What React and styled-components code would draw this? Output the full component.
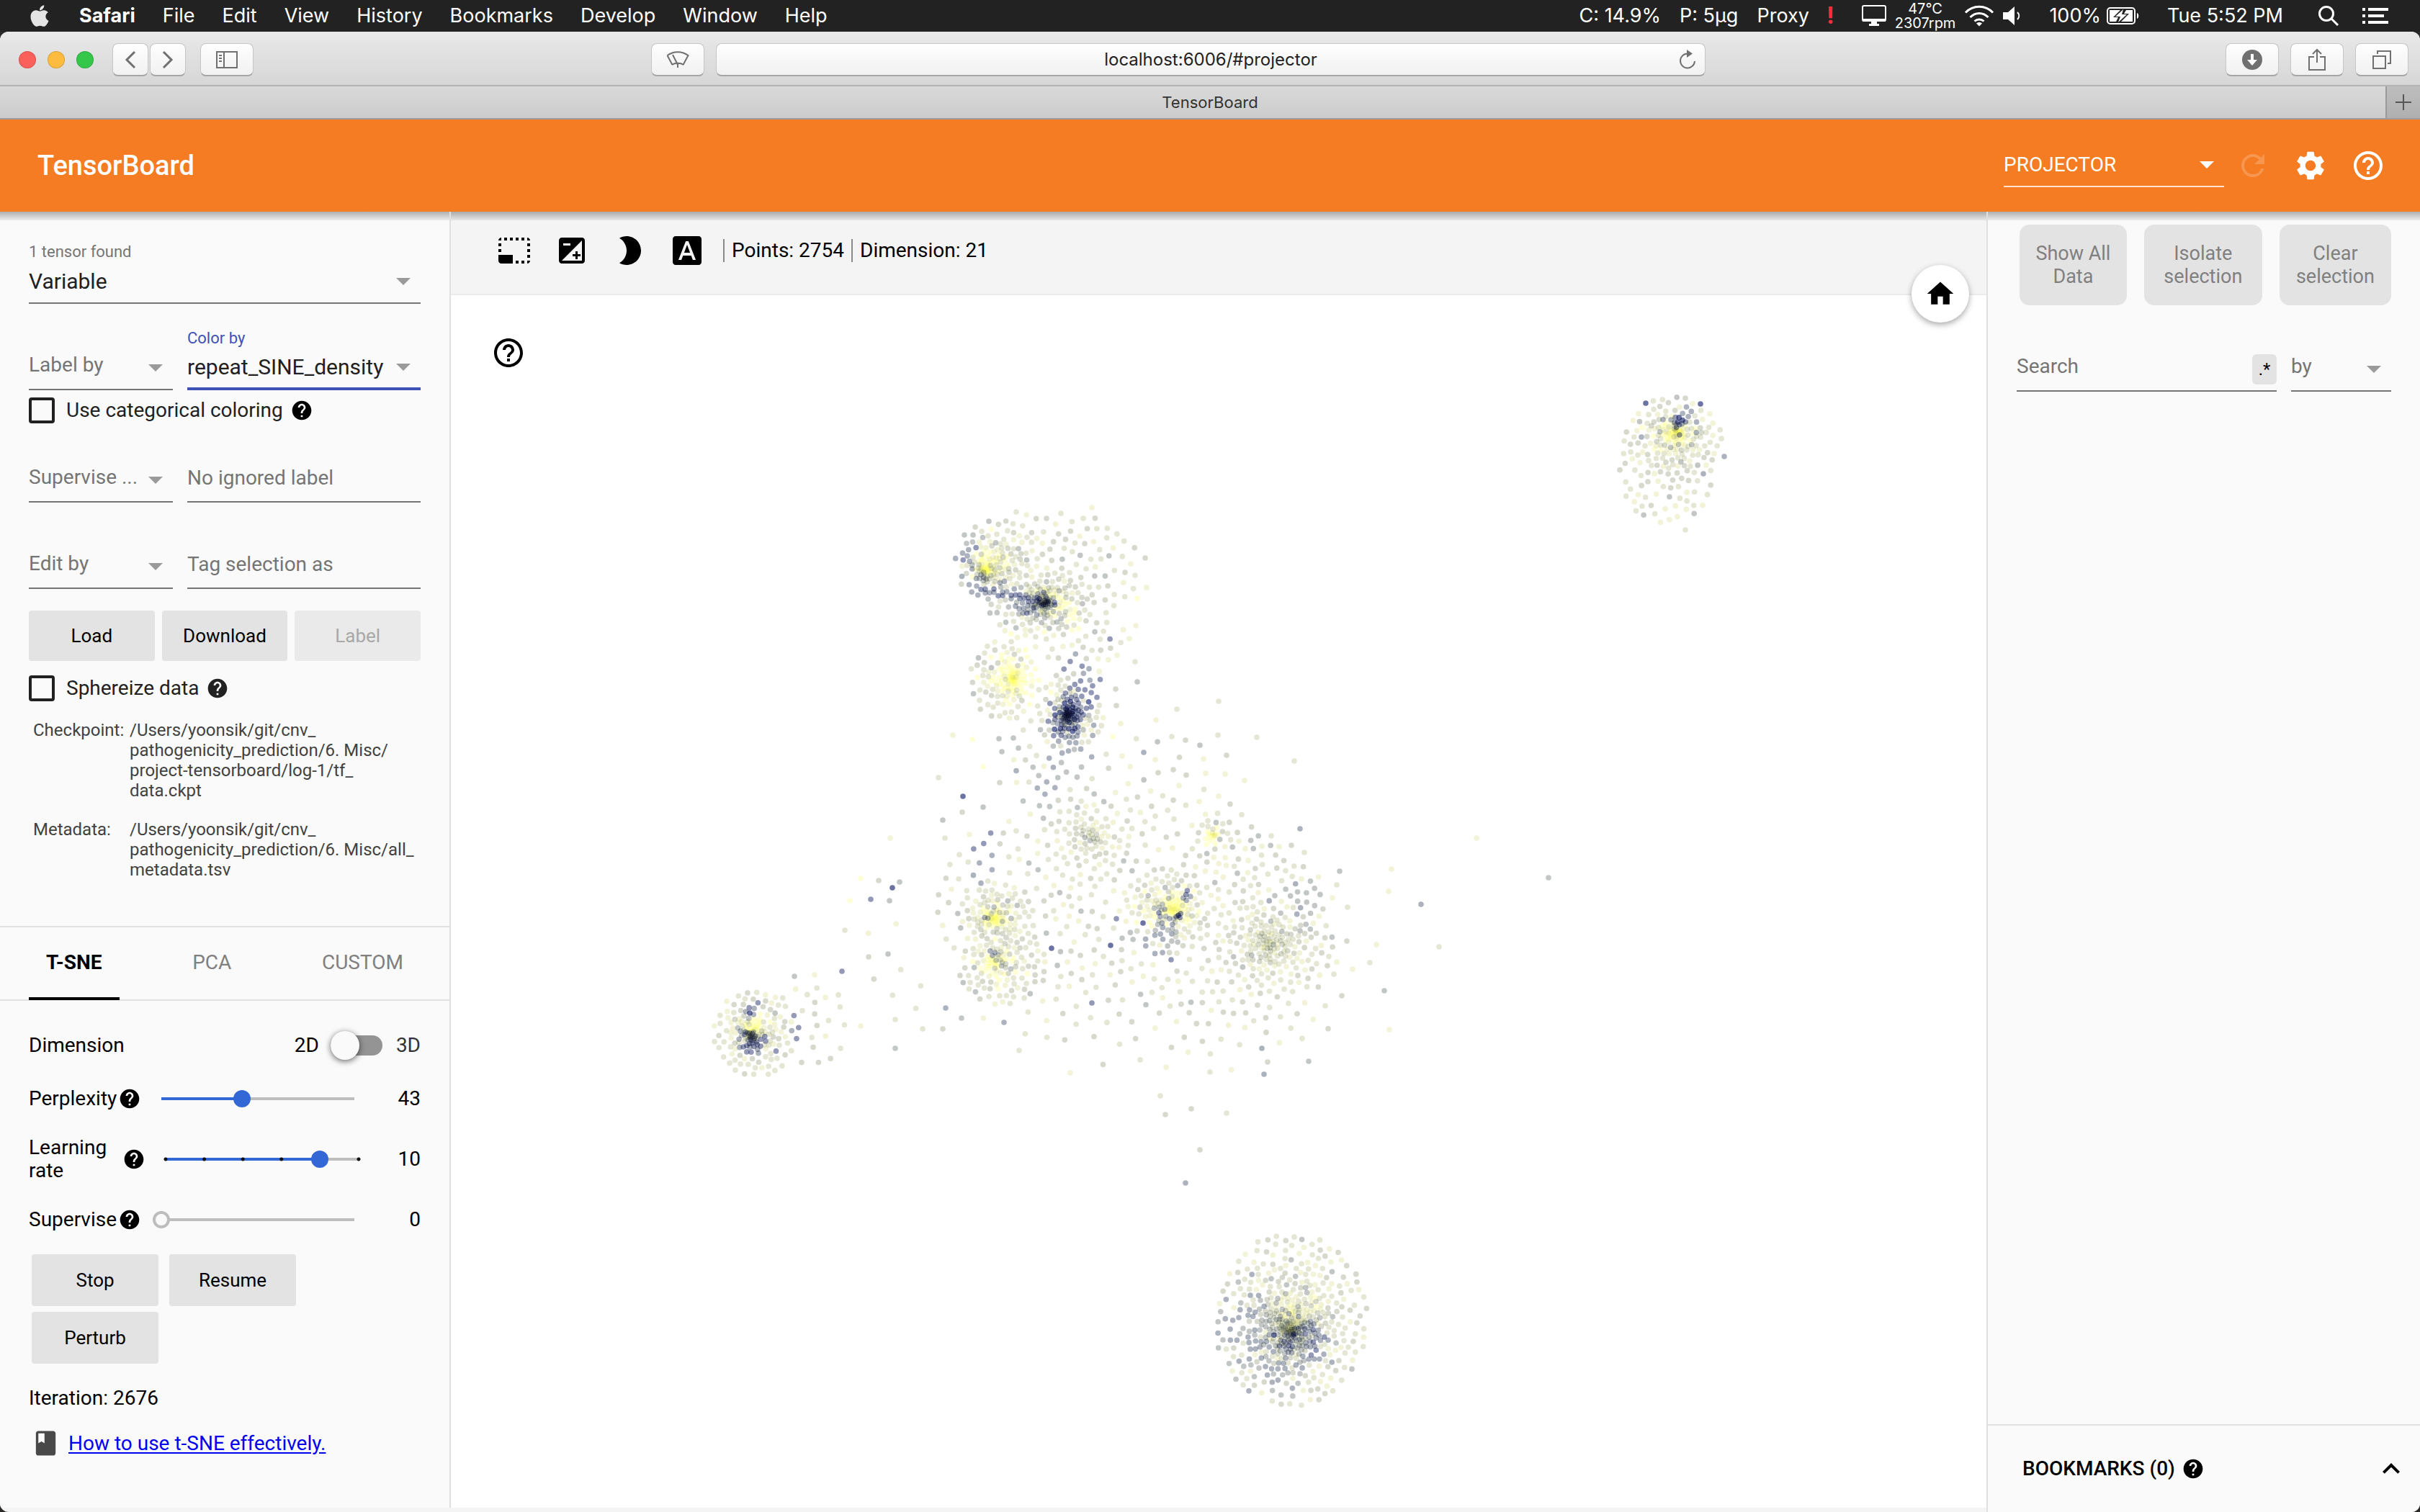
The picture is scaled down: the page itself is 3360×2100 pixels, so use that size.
import React, { useEffect, useRef } from "react";
import styled, { createGlobalStyle, css } from "styled-components";
import {
  MdHelp,
  MdHelpOutline,
  MdSettings,
  MdRefresh,
  MdHome,
  MdClass,
  MdExpandLess,
  MdPhotoSizeSelectSmall,
  MdExposure,
  MdBrightness2,
  MdFontDownload,
} from "react-icons/md";
import { FaApple } from "react-icons/fa";

const GlobalStyle = createGlobalStyle`
  *, *::before, *::after { box-sizing: border-box; }
  body {
    margin: 0;
    background: #2b2a28;
    color: #000;
    font-family: Roboto, "Noto Sans", sans-serif;
    font-size: 28px;
    line-height: 32px;
  }
  button, input, select { font: inherit; color: inherit; margin: 0; }
  svg { display: block; flex: none; }
`;

/* ---------- system menu bar ---------- */

const Screen = styled.div`
  min-height: 100vh;
  display: flex;
  flex-direction: column;
`;

const MenuBar = styled.header`
  height: 44px;
  display: flex;
  align-items: center;
  justify-content: space-between;
  padding: 0 44px 0 38px;
  background: #222;
  color: #fff;
  font-family: Inter, "Noto Sans", sans-serif;
  font-size: 27px;
  white-space: nowrap;
`;

const Menus = styled.nav`
  display: flex;
  align-items: center;
  gap: 38px;
`;

const AppName = styled.strong`
  font-weight: 700;
`;

const Status = styled.div`
  display: flex;
  align-items: center;
  gap: ${(p) => p.$gap}px;
`;

const Sensor = styled.div`
  font-size: 20px;
  line-height: 20px;
  text-align: center;
`;

const Alert = styled.span`
  color: #ff2d3c;
  font-weight: 700;
  font-size: 32px;
`;

/* ---------- browser chrome ---------- */

const BrowserWindow = styled.div`
  flex: 1;
  display: flex;
  flex-direction: column;
  border-radius: 12px;
  overflow: hidden;
  background: #f4f4f4;
`;

const Toolbar = styled.div`
  height: 76px;
  display: grid;
  grid-template-columns: 878px minmax(0, 1fr) 976px;
  align-items: center;
  padding: 4px 16px 0 26px;
  background: linear-gradient(#e9e9e9, #d6d6d6);
  border-bottom: 2px solid #b3b3b3;
`;

const ToolGroup = styled.div`
  display: flex;
  align-items: center;
  justify-content: ${(p) => (p.$end ? "flex-end" : "flex-start")};
  gap: ${(p) => p.$gap || 16}px;
`;

const Lights = styled.div`
  display: flex;
  gap: 16px;
  margin-right: 6px;
`;

const Light = styled.button`
  width: 24px;
  height: 24px;
  padding: 0;
  border-radius: 50%;
  border: 1px solid rgba(0, 0, 0, 0.15);
  background: ${(p) => p.$color};
`;

const raised = css`
  height: 46px;
  border: 1px solid #c6c6c6;
  border-bottom: 2px solid #a6a6a6;
  border-radius: 8px;
  background: linear-gradient(#fefefe, #f1f1f1);
`;

const ChromeButton = styled.button`
  ${raised}
  width: ${(p) => p.$w || 74}px;
  padding: 0;
  display: flex;
  align-items: center;
  justify-content: center;
  color: #707070;
`;

const AddressBar = styled.div`
  ${raised}
  flex: 1;
  display: flex;
  align-items: center;
  padding: 0 12px 0 36px;
  color: #707070;
`;

const Address = styled.input`
  flex: 1;
  min-width: 0;
  border: 0;
  outline: 0;
  background: none;
  text-align: center;
  color: #222;
  font-family: Inter, "Noto Sans", sans-serif;
  font-size: 24px;
`;

const PlainButton = styled.button`
  display: flex;
  align-items: center;
  justify-content: center;
  padding: 0;
  border: 0;
  background: none;
  opacity: ${(p) => (p.disabled ? 0.2 : 1)};
`;

const TabStrip = styled.div`
  height: 46px;
  display: flex;
  background: linear-gradient(#d9d9d9, #cccccc);
  border-bottom: 2px solid #9d9d9d;
`;

const TabTitle = styled.div`
  flex: 1;
  padding-left: 48px;
  text-align: center;
  line-height: 44px;
  font-family: Inter, "Noto Sans", sans-serif;
  font-size: 22px;
  color: #333;
`;

const NewTab = styled.button`
  width: 48px;
  display: flex;
  align-items: center;
  justify-content: center;
  padding: 0;
  border: 0;
  border-left: 2px solid #9a9a9a;
  background: linear-gradient(#bdbdbd, #b0b0b0);
  color: #555;
`;

/* ---------- application header ---------- */

const AppBar = styled.header`
  height: 128px;
  display: flex;
  align-items: center;
  justify-content: space-between;
  padding: 0 48px 0 52px;
  background: #f57c22;
  color: #fff;
`;

const Brand = styled.h1`
  margin: 0;
  font-size: 38px;
  font-weight: 500;
`;

const BarActions = styled.div`
  display: flex;
  align-items: center;
  gap: ${(p) => p.$gap}px;
`;

/* ---------- form parts ---------- */

const SelectBox = styled.div`
  display: grid;
  align-items: center;
  height: 60px;
  border-bottom: ${(p) => (p.$focus ? "4px solid #3f51b5" : p.$light ? "2px solid #fde2cf" : "2px solid #757575")};
  width: ${(p) => (p.$w ? p.$w + "px" : "auto")};
  > * { grid-area: 1 / 1; }
`;

const Caret = styled.span`
  justify-self: end;
  margin-right: 14px;
  border: 10px solid transparent;
  border-top-color: ${(p) => (p.$light ? "#fff" : "#9a9a9a")};
  border-bottom: 0;
  pointer-events: none;
`;

const Select = styled.select`
  width: 100%;
  height: 100%;
  appearance: none;
  border: 0;
  outline: 0;
  background: none;
  padding: 0 36px ${(p) => (p.$hint ? 8 : 0)}px 0;
  font-size: ${(p) => (p.$hint || p.$light ? 28 : 30)}px;
  color: ${(p) => (p.$light ? "#fff" : p.$hint ? "#757575" : "#212121")};
`;

const FieldRow = styled.div`
  display: grid;
  grid-template-columns: ${(p) => p.$cols || "1fr"};
  column-gap: 20px;
  margin-bottom: ${(p) => p.$after || 0}px;
`;

const Field = styled.div`
  display: flex;
  flex-direction: column;
  justify-content: flex-end;
  height: 84px;
`;

const FloatLabel = styled.label`
  height: 24px;
  line-height: 24px;
  font-size: 22px;
  color: ${(p) => (p.$focus ? "#3f51b5" : "#757575")};
`;

const TextInput = styled.input`
  width: 100%;
  height: 60px;
  padding: 0 0 8px;
  border: 0;
  border-bottom: 2px solid #757575;
  outline: 0;
  background: none;
  &::placeholder { color: #757575; opacity: 1; }
`;

const CheckRow = styled.div`
  display: flex;
  align-items: center;
  height: 56px;
  margin-bottom: 16px;
  color: #212121;
`;

const CheckBox = styled.input`
  appearance: none;
  width: 36px;
  height: 36px;
  border: 4px solid #212121;
  border-radius: 4px;
  margin: 0 16px 0 0;
`;

const CheckLabel = styled.label`
  margin-right: 10px;
`;

const Button = styled.button`
  height: ${(p) => p.$h || 72}px;
  width: ${(p) => (p.$w ? p.$w + "px" : "auto")};
  padding: 0;
  border: 0;
  border-radius: 4px;
  background: ${(p) => (p.disabled ? "#eaeaea" : "#e3e3e3")};
  color: ${(p) => (p.disabled ? "#a8a8a8" : "#000")};
  font-size: 26px;
`;

/* ---------- page columns ---------- */

const Main = styled.div`
  flex: 1;
  display: flex;
  align-items: stretch;
`;

const shade = "linear-gradient(rgba(0,0,0,.3), rgba(0,0,0,.05)) 0 0 / 100% 12px no-repeat";

const DataPanel = styled.aside`
  width: 626px;
  flex: none;
  margin-bottom: 6px;
  border-right: 2px solid #e0e0e0;
  background: ${shade}, #fafafa;
`;

const DataSection = styled.section`
  padding: 44px 40px 64px;
  border-bottom: 2px solid #e0e0e0;
`;

const ButtonRow = styled.div`
  display: grid;
  grid-template-columns: repeat(3, 1fr);
  gap: 10px;
  margin: 30px 0 10px;
`;

const Files = styled.dl`
  display: grid;
  grid-template-columns: 134px 1fr;
  row-gap: 26px;
  margin: 0;
  padding-left: 6px;
  font-size: 24px;
  line-height: 28px;
  color: #424242;
  dt, dd { margin: 0; }
`;

const Tabs = styled.div`
  display: flex;
  justify-content: space-between;
  padding: 0 40px;
  border-bottom: 2px solid #e0e0e0;
`;

const Tab = styled.button`
  height: 101px;
  padding: 0 24px;
  margin-bottom: -1px;
  border: 0;
  border-bottom: 4px solid ${(p) => (p.$active ? "#000" : "transparent")};
  background: none;
  font-weight: ${(p) => (p.$active ? 700 : 400)};
  color: ${(p) => (p.$active ? "#000" : "#808080")};
`;

const Settings = styled.section`
  padding: 30px 40px 60px;
`;

const SettingRow = styled.div`
  display: flex;
  align-items: center;
  height: ${(p) => p.$h || 84}px;
`;

const SettingLabel = styled.label`
  max-width: 128px;
  margin-right: 2px;
`;

const Value = styled.output`
  flex: 1;
  text-align: right;
`;

const Spacer = styled.div`
  flex: 1;
`;

const Switch = styled.input`
  appearance: none;
  width: 72px;
  height: 28px;
  margin: 0 19px 0 16px;
  border-radius: 14px;
  background: #949494;
  display: flex;
  align-items: center;
  &::before {
    content: "";
    width: 40px;
    height: 40px;
    flex: none;
    border-radius: 50%;
    background: #fafafa;
    box-shadow: 0 2px 8px rgba(0, 0, 0, 0.6);
  }
`;

const SideText = styled.span`
  color: ${(p) => (p.$soft ? "#333" : "#000")};
`;

const dots = (n) =>
  Array.from({ length: n }, (_, i) => {
    const f = i / (n - 1);
    return `radial-gradient(circle 2px at calc(12px + (100% - 24px) * ${f}), #111 2px, transparent 3px)`;
  }).join(",");

const Range = styled.input`
  appearance: none;
  width: 292px;
  height: 28px;
  margin-left: 16px;
  background:
    ${(p) => (p.$ticks ? dots(p.$ticks) + "," : "")}
    linear-gradient(to right, #3367d6 ${(p) => p.$fill}%, #bdbdbd ${(p) => p.$fill}%) center / calc(100% - 24px) 4px no-repeat;
  &::-webkit-slider-thumb {
    appearance: none;
    width: 24px;
    height: 24px;
    border-radius: 50%;
    border: ${(p) => (p.$fill ? "0" : "4px solid #bdbdbd")};
    background: ${(p) => (p.$fill ? "#3367d6" : "#fafafa")};
  }
`;

const RunButtons = styled.div`
  display: flex;
  flex-wrap: wrap;
  gap: 8px 15px;
  padding: 6px 4px 32px;
`;

const Guide = styled.div`
  display: flex;
  align-items: center;
  gap: 11px;
  padding-left: 3px;
  margin-top: 26px;
  color: #484848;
  a { color: #0000ee; text-underline-offset: 3px; }
`;

const Center = styled.main`
  flex: 1;
  min-width: 0;
  display: flex;
  flex-direction: column;
  margin-bottom: 6px;
  background: #fff;
`;

const PlotBar = styled.div`
  height: 116px;
  display: flex;
  align-items: flex-start;
  padding: 30px 64px;
  background: ${shade}, #f4f4f4;
  border-bottom: 2px solid #ebebeb;
`;

const PlotTools = styled.div`
  display: flex;
  gap: 32px;
  margin-right: 26px;
`;

const Stat = styled.span`
  margin: 8px 10px 0 0;
  padding-left: 10px;
  border-left: 2px solid #8a8a8a;
`;

const Plot = styled.div`
  flex: 1;
  position: relative;
  min-height: 400px;
`;

const Canvas = styled.canvas`
  position: absolute;
  inset: 0;
  width: 100%;
  height: 100%;
`;

const HelpSpot = styled.div`
  position: absolute;
  left: 56px;
  top: 56px;
`;

const HomeButton = styled(PlainButton)`
  position: absolute;
  right: 24px;
  top: -42px;
  width: 80px;
  height: 80px;
  border-radius: 50%;
  background: #fff;
  box-shadow: 0 3px 8px rgba(0, 0, 0, 0.35);
`;

const Inspector = styled.aside`
  width: 602px;
  flex: none;
  display: flex;
  flex-direction: column;
  border-left: 2px solid #e0e0e0;
  background: ${shade}, #fafafa;
`;

const InspectorActions = styled.div`
  display: flex;
  gap: 24px;
  padding: 18px 40px 60px 44px;
`;

const ActionButton = styled.button`
  flex: ${(p) => p.$w} 1 0;
  height: 112px;
  padding: 0 16px;
  border: 0;
  border-radius: 14px;
  background: #e3e3e3;
  color: #808080;
  font-size: 27px;
`;

const SearchRow = styled.div`
  display: grid;
  grid-template-columns: 361px 1fr;
  gap: 20px;
  padding: 0 40px;
`;

const SearchBox = styled.div`
  display: flex;
  align-items: center;
  height: 60px;
  border-bottom: 2px solid #757575;
`;

const SearchInput = styled.input`
  flex: 1;
  min-width: 0;
  padding: 0 0 8px;
  border: 0;
  outline: 0;
  background: none;
  &::placeholder { color: #757575; opacity: 1; }
`;

const RegexButton = styled.button`
  width: 34px;
  height: 42px;
  padding: 0;
  border: 0;
  border-radius: 6px;
  background: #e3e3e3;
  font-size: 24px;
`;

const Bookmarks = styled.footer`
  display: flex;
  align-items: center;
  height: 122px;
  margin-top: auto;
  padding: 0 16px 0 48px;
  border-top: 2px solid #e0e0e0;
`;

const BookmarksTitle = styled.h2`
  margin: 0 9px 0 0;
  font-size: 28px;
  font-weight: 500;
`;

/* ---------- scatter plot data ---------- */

const PALETTE = [
  [255, 255, 214],
  [243, 243, 216],
  [229, 231, 212],
  [214, 217, 204],
  [194, 199, 198],
  [172, 178, 190],
  [147, 153, 183],
  [106, 115, 163],
];

// fx, fy: densest spot; ex, ey, rx, ry: outline; near, grow: spacing at the spot and its growth outward
const CLUSTERS = [
  { fx: 2328, fy: 598, ex: 2322, ey: 614, rx: 70, ry: 64, near: 2, grow: 8, p: 1, n: 3000 },
  { fx: 2315, fy: 655, ex: 2314, ey: 655, rx: 66, ry: 72, near: 9, grow: 2, p: 0.5, n: 900 },
  { fx: 1366, fy: 792, ex: 1390, ey: 782, rx: 64, ry: 62, near: 2, grow: 8, p: 1, n: 2400 },
  { fx: 1450, fy: 836, ex: 1446, ey: 838, rx: 74, ry: 54, near: 2, grow: 7, p: 1.1, n: 2600 },
  { fx: 1470, fy: 846, ex: 1474, ey: 848, rx: 40, ry: 30, near: 4, grow: 4, p: 0.7, n: 900 },
  { fx: 1480, fy: 780, ex: 1474, ey: 790, rx: 110, ry: 78, near: 10, grow: 4, p: 0.5, n: 2500 },
  { fx: 1408, fy: 943, ex: 1396, ey: 945, rx: 50, ry: 56, near: 2, grow: 8, p: 1, n: 2000 },
  { fx: 1482, fy: 996, ex: 1486, ey: 990, rx: 46, ry: 58, near: 2, grow: 7, p: 1.1, n: 2600 },
  { fx: 1506, fy: 945, ex: 1504, ey: 940, rx: 28, ry: 46, near: 8, grow: 3, p: 0.5, n: 700 },
  { fx: 1495, fy: 890, ex: 1496, ey: 890, rx: 70, ry: 40, near: 10, grow: 3, p: 0.5, n: 700 },
  { fx: 1460, fy: 1070, ex: 1462, ey: 1065, rx: 58, ry: 80, near: 12, grow: 3, p: 0.5, n: 900 },
  { fx: 1514, fy: 1160, ex: 1512, ey: 1168, rx: 64, ry: 66, near: 4, grow: 8, p: 0.9, n: 1200 },
  { fx: 1684, fy: 1160, ex: 1686, ey: 1160, rx: 34, ry: 36, near: 2, grow: 11, p: 1.1, n: 700 },
  { fx: 1632, fy: 1262, ex: 1620, ey: 1266, rx: 66, ry: 62, near: 2, grow: 8, p: 1, n: 2600 },
  { fx: 1380, fy: 1277, ex: 1384, ey: 1270, rx: 56, ry: 50, near: 2, grow: 8, p: 1.1, n: 1800 },
  { fx: 1382, fy: 1336, ex: 1392, ey: 1338, rx: 62, ry: 58, near: 3, grow: 7, p: 1, n: 2400 },
  { fx: 1762, fy: 1312, ex: 1766, ey: 1306, rx: 86, ry: 80, near: 3, grow: 8, p: 1, n: 2600 },
  { fx: 1808, fy: 1252, ex: 1806, ey: 1252, rx: 34, ry: 52, near: 8, grow: 5, p: 0.6, n: 500 },
  { fx: 1710, fy: 1205, ex: 1714, ey: 1215, rx: 80, ry: 70, near: 10, grow: 2, p: 0.5, n: 1400 },
  { fx: 1043, fy: 1436, ex: 1050, ey: 1434, rx: 60, ry: 62, near: 2, grow: 8, p: 1.1, n: 2600 },
  { fx: 1100, fy: 1420, ex: 1124, ey: 1422, rx: 64, ry: 58, near: 10, grow: 7, p: 0.5, n: 300 },
  { fx: 1793, fy: 1848, ex: 1792, ey: 1833, rx: 107, ry: 120, near: 2, grow: 9, p: 1, n: 6500 },
  { fx: 1490, fy: 1270, ex: 1490, ey: 1260, rx: 190, ry: 140, near: 11, grow: 5, p: 0.5, n: 3200 },
  { fx: 1700, fy: 1340, ex: 1700, ey: 1315, rx: 155, ry: 115, near: 11, grow: 4, p: 0.5, n: 2200 },
  { fx: 1590, fy: 1130, ex: 1590, ey: 1130, rx: 135, ry: 105, near: 13, grow: 7, p: 0.5, n: 1000 },
  { fx: 1720, fy: 1390, ex: 1710, ey: 1380, rx: 160, ry: 90, near: 15, grow: 6, p: 0.5, n: 800 },
  { fx: 1500, fy: 1400, ex: 1500, ey: 1380, rx: 180, ry: 75, near: 16, grow: 8, p: 0.5, n: 500 },
  { fx: 1640, fy: 1430, ex: 1640, ey: 1410, rx: 220, ry: 80, near: 20, grow: 8, p: 0.5, n: 400 },
  { fx: 1290, fy: 1330, ex: 1280, ey: 1320, rx: 80, ry: 90, near: 24, grow: 6, p: 0.5, n: 70 },
];

// x, y, radius, palette level
const TINTS = [
  [2338, 578, 20, 5.2], [2331, 589, 9, 6.4], [2318, 606, 16, 0], [2345, 607, 14, 0],
  [1369, 780, 22, 0], [1360, 804, 9, 4.5], [1332, 775, 16, 5], [1346, 820, 14, 5.4],
  [1390, 823, 12, 5], [1415, 840, 20, 4.6], [1446, 838, 14, 6], [1476, 846, 22, 0], [1455, 860, 22, 3.6],
  [1408, 942, 34, 0], [1385, 948, 9, 0], [1362, 955, 16, 2.4],
  [1480, 998, 24, 6.4], [1500, 985, 20, 6.2], [1506, 942, 34, 5.8], [1484, 1045, 36, 4.8],
  [1440, 1100, 44, 4.4], [1366, 1200, 24, 5.4],
  [1373, 1273, 10, 5.8], [1396, 1266, 16, 4], [1382, 1276, 16, 0], [1382, 1336, 26, 0], [1376, 1322, 7, 4.6], [1396, 1340, 10, 3.4],
  [1632, 1262, 28, 0], [1635, 1272, 5, 6.2], [1610, 1264, 8, 5], [1646, 1244, 9, 5.2], [1610, 1300, 28, 4.6],
  [1592, 1268, 14, 0], [1684, 1160, 16, 0], [1697, 1140, 8, 3.4], [1808, 1252, 26, 4.4],
  [1043, 1436, 6, 7], [1041, 1454, 20, 5.6], [1043, 1402, 10, 6], [1048, 1423, 15, 0], [1112, 1432, 22, 5.6],
  [1792, 1848, 11, 3.2], [1775, 1850, 11, 6.2], [1790, 1863, 13, 6.2], [1808, 1851, 10, 6], [1782, 1835, 26, 3.2],
  [1796, 1816, 26, 1], [1720, 1845, 46, 4.6], [1826, 1868, 24, 5], [1775, 1905, 34, 4.6],
];

// x, y, palette level of single points away from the clusters
const STRAYS = [
  [2150, 1219, 4], [1973, 1256, 4.6], [2050, 1164, 1], [1998, 1315, 1.6], [1666, 1597, 3], [1646, 1643, 5],
  [1611, 1522, 2], [1618, 1548, 3], [1654, 1540, 3], [1703, 1546, 2], [1236, 1164, 1], [1209, 1249, 6],
  [1239, 1233, 6.5], [1337, 1106, 7], [1249, 1225, 4], [1235, 1251, 4], [1220, 1223, 3], [1195, 1220, 0],
  [1180, 1251, 0], [1173, 1292, 2], [1206, 1329, 3.4], [1233, 1325, 3.6], [1169, 1349, 6], [1131, 1354, 1],
  [1103, 1356, 4], [1312, 1164, 2], [1346, 1159, 1], [1332, 1187, 2], [1309, 1139, 3.6], [1336, 1128, 3],
  [1365, 1121, 4], [1303, 1080, 2], [1323, 1021, 1], [1350, 1027, 0], [1388, 1087, 3], [1365, 1065, 0],
  [1387, 1026, 4], [1391, 1044, 4], [1407, 1025, 3.6], [1414, 1039, 4], [1516, 705, 0.6], [1504, 720, 1.6],
  [1473, 713, 2], [1453, 720, 3], [1411, 711, 2], [1425, 715, 1], [1373, 724, 3.6], [1339, 743, 4],
  [1351, 743, 4], [1590, 775, 2.6], [1576, 799, 2], [1592, 816, 1], [1579, 831, 0], [1577, 869, 0.5],
  [1568, 887, 1], [1551, 910, 1], [1576, 919, 1.6], [1579, 947, 4.4], [1549, 957, 3], [1550, 980, 3],
  [1556, 1005, 1], [1634, 985, 2], [1692, 974, 2], [1605, 1000, 1], [1627, 1023, 2], [1646, 1028, 3],
  [1666, 1035, 4.2], [1691, 1021, 2], [1745, 1024, 2.4], [1703, 1049, 3], [1797, 1057, 2], [1671, 1054, 1],
  [1674, 1074, 1], [1701, 1075, 1], [1728, 1084, 1], [1588, 1045, 4.6], [1629, 1069, 3], [1604, 1055, 1],
  [1558, 1050, 1], [1545, 1023, 0], [1805, 1151, 5], [1765, 1161, 2], [1793, 1174, 3], [1811, 1184, 2],
  [1860, 1210, 4], [1932, 1207, 1], [1928, 1238, 1], [1856, 1229, 2], [1850, 1247, 1], [1871, 1260, 2],
  [1870, 1307, 3], [1911, 1312, 0.6], [1902, 1337, 2], [1856, 1336, 1], [1878, 1346, 1], [1852, 1353, 2],
  [1922, 1376, 3.6], [1863, 1383, 2.6], [1840, 1397, 2], [1929, 1430, 1], [1801, 1408, 3], [1760, 1475, 3],
  [1817, 1474, 4], [1755, 1492, 4.6], [1752, 1456, 5], [1680, 1489, 2], [1583, 1472, 2],
  [1486, 1490, 1], [1415, 1459, 2], [1394, 1420, 5], [1335, 1414, 4], [1309, 1429, 3], [1281, 1429, 2],
  [1243, 1456, 4.4], [1313, 1400, 4.8], [1243, 1416, 2], [1195, 1425, 1], [1516, 1393, 6], [1460, 1317, 7],
  [1542, 1313, 6.6], [1587, 1282, 6.6], [1626, 1333, 6.4], [1550, 1276, 5.6], [2285, 560, 7], [2361, 561, 6.5],
  [2279, 607, 5], [2394, 634, 5], [2340, 736, 2], [2365, 658, 5], [1698, 1861, 4],
];

// the chain that joins the two upper clusters
const CHAIN = Array.from({ length: 22 }, (_, i) => [
  1356 + i * 4 + (i % 3) * 2,
  818 + i * 0.8 + ((i * 7) % 5) * 2 - 4,
  i > 12 ? 6.4 : 5 + (i % 2),
]);

function buildPoints() {
  let seed = 20171;
  const rnd = () => {
    seed = (seed * 1664525 + 1013904223) % 4294967296;
    return seed / 4294967296;
  };
  const points = [...STRAYS, ...CHAIN];
  for (const c of CLUSTERS) {
    for (let i = 0; i < c.n; i++) {
      const a = rnd() * Math.PI * 2;
      const t = Math.pow(rnd(), c.p);
      const x = c.fx + (c.ex + Math.cos(a) * c.rx - c.fx) * t;
      const y = c.fy + (c.ey + Math.sin(a) * c.ry - c.fy) * t;
      const gap = c.near + c.grow * t;
      let free = true;
      for (let j = 0; j < points.length && free; j++) {
        const dx = points[j][0] - x;
        const dy = points[j][1] - y;
        if (dx * dx + dy * dy < gap * gap) free = false;
      }
      if (!free) continue;
      let level = 0.9 + rnd() * 2.1;
      if (rnd() < 0.14) level += 1.5;
      for (const [tx, ty, r, l] of TINTS) {
        const d2 = (tx - x) ** 2 + (ty - y) ** 2;
        if (rnd() < Math.exp(-d2 / (r * r))) level = l + rnd() * 1.4 - 0.7;
      }
      points.push([x, y, level]);
    }
  }
  return points;
}

const POINTS = buildPoints();
const VIEW_CENTER = [1692, 1252];

function ScatterPlot() {
  const ref = useRef(null);
  useEffect(() => {
    const canvas = ref.current;
    const draw = () => {
      const w = canvas.clientWidth;
      const h = canvas.clientHeight;
      canvas.width = w;
      canvas.height = h;
      const ctx = canvas.getContext("2d");
      ctx.fillStyle = "#fff";
      ctx.fillRect(0, 0, w, h);
      ctx.globalCompositeOperation = "multiply";
      for (const [x, y, level] of POINTS) {
        const l = Math.max(0, Math.min(7, Math.round(level)));
        ctx.fillStyle = `rgb(${PALETTE[l].join(",")})`;
        ctx.beginPath();
        ctx.arc(x - VIEW_CENTER[0] + w / 2, y - VIEW_CENTER[1] + h / 2, 3.8, 0, Math.PI * 2);
        ctx.fill();
      }
    };
    draw();
    window.addEventListener("resize", draw);
    return () => window.removeEventListener("resize", draw);
  }, []);
  return <Canvas ref={ref} role="img" aria-label="t-SNE projection" />;
}

/* ---------- line icons ---------- */

const Icon = ({ w, h, children, sw = 2 }) => (
  <svg width={w} height={h} viewBox={`0 0 ${w} ${h}`} fill="none" stroke="currentColor" strokeWidth={sw} aria-hidden="true">
    {children}
  </svg>
);

const MonitorIcon = () => (
  <Icon w={34} h={30}>
    <rect x="1" y="1" width="32" height="21" rx="2" />
    <path d="M1 19h32v4H1zM13 23h8v3h3v3H10v-3h3z" fill="currentColor" stroke="none" />
  </Icon>
);
const WifiIcon = () => (
  <Icon w={42} h={30} sw={3}>
    <path d="M2 10.500C12.500-0.500 29.500-0.500 40 10.500M8.500 17C15.500 9.500 26.500 9.500 33.500 17M14.500 22.500c3.700-3.500 9.300-3.500 13 0" />
    <path d="M17 25.500c2.400-2 5.600-2 8 0l-4 4z" fill="currentColor" stroke="none" />
  </Icon>
);
const SpeakerIcon = () => (
  <Icon w={26} h={26}>
    <path d="M0 8h7l9-8v26l-9-8H0z" fill="currentColor" stroke="none" />
    <path d="M20 8c3 3 3 7 0 10" />
  </Icon>
);
const BatteryIcon = () => (
  <Icon w={46} h={24}>
    <rect x="1" y="1" width="38" height="22" rx="4" />
    <path d="M4 4h15L9 14h7l-3 6H4zM27 4h9v16H20l11-11h-7z" fill="currentColor" stroke="none" />
    <path d="M23 3L12 13h7l-3 8 12-11h-7z" fill="currentColor" stroke="none" />
    <path d="M42 8c3 1 3 7 0 8z" fill="currentColor" stroke="none" />
  </Icon>
);
const SearchIcon = () => (
  <Icon w={30} h={30} sw={3}>
    <circle cx="12" cy="12" r="9.500" />
    <path d="M19 19l9 9" />
  </Icon>
);
const ListIcon = () => (
  <Icon w={36} h={22} sw={4}>
    <path d="M0 2h4M8 2h28M0 11h4M8 11h22M0 20h4M8 20h28" />
  </Icon>
);
const ChevronIcon = ({ right }) => (
  <Icon w={16} h={26} sw={3}>
    <path d={right ? "M2 2l11 11L2 24" : "M14 2L3 13l11 11"} />
  </Icon>
);
const SidebarIcon = () => (
  <Icon w={30} h={24}>
    <path d="M1 1h28v22H1zM11 1v22M4 6h4M4 10h4M4 14h4" />
  </Icon>
);
const WiperIcon = () => (
  <Icon w={32} h={24}>
    <path d="M1.500 6C10-.5 22-.5 30.500 6l-7 13M1.500 6l7 13M9 5l7 14" />
    <path d="M8 19c4-3 12-3 16 0M16 17v6" />
  </Icon>
);
const ReloadIcon = () => (
  <Icon w={24} h={28}>
    <path d="M12 5.500A10 10 0 1 0 22 16" />
    <path d="M11 0l8 5.500-8 5.500z" fill="currentColor" stroke="none" />
  </Icon>
);
const DownloadIcon = () => (
  <Icon w={28} h={28}>
    <circle cx="14" cy="14" r="14" fill="currentColor" stroke="none" />
    <path d="M12 6h4v8h5l-7 8-7-8h5z" fill="#fff" stroke="none" />
  </Icon>
);
const ShareIcon = () => (
  <Icon w={24} h={32}>
    <path d="M8 12H1v18h22V12h-7M12 20V2M6 8l6-6 6 6" />
  </Icon>
);
const OverviewIcon = () => (
  <Icon w={26} h={26}>
    <path d="M1 8h17v17H1zM7 5V1h18v17h-4" />
  </Icon>
);
const PlusIcon = () => (
  <Icon w={22} h={22}>
    <path d="M11 0v22M0 11h22" />
  </Icon>
);

/* ---------- composed parts ---------- */

function Dropdown({ id, text, label, focus, light, hint, w }) {
  return (
    <SelectBox $focus={focus} $light={light} $w={w}>
      <Select id={id} aria-label={label} $hint={hint} $light={light} defaultValue={text}>
        <option>{text}</option>
      </Select>
      <Caret $light={light} />
    </SelectBox>
  );
}

function Slider({ id, name, value, shown, min, max, ticks }) {
  const fill = ((value - min) / (max - min)) * 100;
  return (
    <SettingRow>
      <SettingLabel htmlFor={id}>{name}</SettingLabel>
      <MdHelp size={32} />
      <Range id={id} type="range" min={min} max={max} defaultValue={value} $fill={fill} $ticks={ticks} />
      <Value htmlFor={id}>{shown}</Value>
    </SettingRow>
  );
}

const MENUS = ["File", "Edit", "View", "History", "Bookmarks", "Develop", "Window", "Help"];

export default function App() {
  return (
    <Screen>
      <GlobalStyle />
      <MenuBar>
        <Menus>
          <FaApple size={34} color="#e4e4e4" />
          <AppName>Safari</AppName>
          {MENUS.map((m) => (
            <span key={m}>{m}</span>
          ))}
        </Menus>
        <Status $gap={48}>
          <Status $gap={38}>
            <Status $gap={26}>
              <span>C: 14.9%</span>
              <span>P: 5µg</span>
              <Status $gap={24}>
                <span>Proxy</span>
                <Alert>!</Alert>
              </Status>
            </Status>
            <Status $gap={12}>
              <MonitorIcon />
              <Sensor>
                47°C
                <br />
                2307rpm
              </Sensor>
              <WifiIcon />
              <SpeakerIcon />
            </Status>
            <Status $gap={8}>
              <span>100%</span>
              <BatteryIcon />
            </Status>
            <span>Tue 5:52 PM</span>
          </Status>
          <Status $gap={32}>
            <SearchIcon />
            <ListIcon />
          </Status>
        </Status>
      </MenuBar>

      <BrowserWindow>
        <Toolbar>
          <ToolGroup $gap={20}>
            <Lights>
              <Light $color="#fc605b" aria-label="Close" />
              <Light $color="#fdbc40" aria-label="Minimize" />
              <Light $color="#34c749" aria-label="Zoom" />
            </Lights>
            <ToolGroup $gap={2}>
              <ChromeButton $w={50} aria-label="Back"><ChevronIcon /></ChromeButton>
              <ChromeButton $w={50} aria-label="Forward"><ChevronIcon right /></ChromeButton>
            </ToolGroup>
            <ChromeButton aria-label="Sidebar"><SidebarIcon /></ChromeButton>
          </ToolGroup>
          <ToolGroup>
            <ChromeButton aria-label="Clear"><WiperIcon /></ChromeButton>
            <AddressBar>
              <Address aria-label="Address" defaultValue="localhost:6006/#projector" />
              <PlainButton aria-label="Reload"><ReloadIcon /></PlainButton>
            </AddressBar>
          </ToolGroup>
          <ToolGroup $end>
            <ChromeButton aria-label="Downloads"><DownloadIcon /></ChromeButton>
            <ChromeButton aria-label="Share"><ShareIcon /></ChromeButton>
            <ChromeButton aria-label="Tabs"><OverviewIcon /></ChromeButton>
          </ToolGroup>
        </Toolbar>
        <TabStrip>
          <TabTitle>TensorBoard</TabTitle>
          <NewTab aria-label="New tab"><PlusIcon /></NewTab>
        </TabStrip>

        <AppBar>
          <Brand>TensorBoard</Brand>
          <BarActions $gap={16}>
            <Dropdown label="Dashboard" text="PROJECTOR" light w={306} />
            <BarActions $gap={32}>
              <PlainButton disabled aria-label="Refresh"><MdRefresh size={48} color="#fff" /></PlainButton>
              <PlainButton aria-label="Settings"><MdSettings size={48} color="#fff" /></PlainButton>
              <PlainButton aria-label="Help"><MdHelpOutline size={48} color="#fff" /></PlainButton>
            </BarActions>
          </BarActions>
        </AppBar>

        <Main>
          <DataPanel>
            <DataSection>
              <FieldRow $after={36}>
                <Field>
                  <FloatLabel htmlFor="tensor">1 tensor found</FloatLabel>
                  <Dropdown id="tensor" text="Variable" />
                </Field>
              </FieldRow>
              <FieldRow $cols="200px 1fr">
                <Field>
                  <Dropdown label="Label by" text="Label by" hint />
                </Field>
                <Field>
                  <FloatLabel htmlFor="color" $focus>Color by</FloatLabel>
                  <Dropdown id="color" text="repeat_SINE_density" focus />
                </Field>
              </FieldRow>
              <CheckRow>
                <CheckBox type="checkbox" id="categorical" />
                <CheckLabel htmlFor="categorical">Use categorical coloring</CheckLabel>
                <MdHelp size={32} color="#000" />
              </CheckRow>
              <FieldRow $cols="200px 1fr" $after={36}>
                <Field>
                  <Dropdown label="Supervise with" text="Supervise ..." hint />
                </Field>
                <Field>
                  <TextInput aria-label="Ignored label" placeholder="No ignored label" />
                </Field>
              </FieldRow>
              <FieldRow $cols="200px 1fr">
                <Field>
                  <Dropdown label="Edit by" text="Edit by" hint />
                </Field>
                <Field>
                  <TextInput aria-label="Tag selection as" placeholder="Tag selection as" />
                </Field>
              </FieldRow>
              <ButtonRow>
                <Button $h={70}>Load</Button>
                <Button $h={70}>Download</Button>
                <Button $h={70} disabled>Label</Button>
              </ButtonRow>
              <CheckRow>
                <CheckBox type="checkbox" id="sphereize" />
                <CheckLabel htmlFor="sphereize">Sphereize data</CheckLabel>
                <MdHelp size={32} />
              </CheckRow>
              <Files>
                <dt>Checkpoint:</dt>
                <dd>/Users/yoonsik/git/cnv_<wbr />pathogenicity_prediction/6. Misc/<wbr />project-tensorboard/log-1/tf_<wbr />data.ckpt</dd>
                <dt>Metadata:</dt>
                <dd>/Users/yoonsik/git/cnv_<wbr />pathogenicity_prediction/6. Misc/all_<wbr />metadata.tsv</dd>
              </Files>
            </DataSection>

            <Tabs role="tablist">
              <Tab role="tab" aria-selected="true" $active>T-SNE</Tab>
              <Tab role="tab" aria-selected="false">PCA</Tab>
              <Tab role="tab" aria-selected="false">CUSTOM</Tab>
            </Tabs>

            <Settings>
              <SettingRow $h={64}>
                <label htmlFor="dimension">Dimension</label>
                <Spacer />
                <SideText>2D</SideText>
                <Switch id="dimension" type="checkbox" role="switch" />
                <SideText $soft>3D</SideText>
              </SettingRow>
              <Slider id="perplexity" name="Perplexity" value={43} shown="43" min={2} max={100} />
              <Slider id="rate" name="Learning rate" value={4} shown="10" min={0} max={5} ticks={6} />
              <Slider id="supervise" name="Supervise" value={0} shown="0" min={0} max={100} />
              <RunButtons>
                <Button $w={176}>Stop</Button>
                <Button $w={176}>Resume</Button>
                <Button $w={176}>Perturb</Button>
              </RunButtons>
              <div>Iteration: 2676</div>
              <Guide>
                <MdClass size={41} />
                <a href="#guide">How to use t-SNE effectively.</a>
              </Guide>
            </Settings>
          </DataPanel>

          <Center>
            <PlotBar>
              <PlotTools>
                <PlainButton aria-label="Select"><MdPhotoSizeSelectSmall size={48} /></PlainButton>
                <PlainButton aria-label="Edit labels"><MdExposure size={48} /></PlainButton>
                <PlainButton aria-label="Night mode"><MdBrightness2 size={48} /></PlainButton>
                <PlainButton aria-label="3D labels"><MdFontDownload size={48} /></PlainButton>
              </PlotTools>
              <Stat>Points: 2754</Stat>
              <Stat>Dimension: 21</Stat>
            </PlotBar>
            <Plot>
              <ScatterPlot />
              <HelpSpot>
                <PlainButton aria-label="Plot help"><MdHelpOutline size={48} /></PlainButton>
              </HelpSpot>
              <HomeButton aria-label="Reset view"><MdHome size={44} /></HomeButton>
            </Plot>
          </Center>

          <Inspector>
            <InspectorActions>
              <ActionButton $w={147}>Show All Data</ActionButton>
              <ActionButton $w={166}>Isolate selection</ActionButton>
              <ActionButton $w={155}>Clear selection</ActionButton>
            </InspectorActions>
            <SearchRow>
              <SearchBox>
                <SearchInput aria-label="Search" placeholder="Search" />
                <RegexButton aria-label="Regular expression">.*</RegexButton>
              </SearchBox>
              <Dropdown label="Search by" text="by" hint />
            </SearchRow>
            <Bookmarks>
              <BookmarksTitle>BOOKMARKS (0)</BookmarksTitle>
              <MdHelp size={32} />
              <Spacer />
              <PlainButton aria-label="Expand bookmarks"><MdExpandLess size={48} /></PlainButton>
            </Bookmarks>
          </Inspector>
        </Main>
      </BrowserWindow>
    </Screen>
  );
}
